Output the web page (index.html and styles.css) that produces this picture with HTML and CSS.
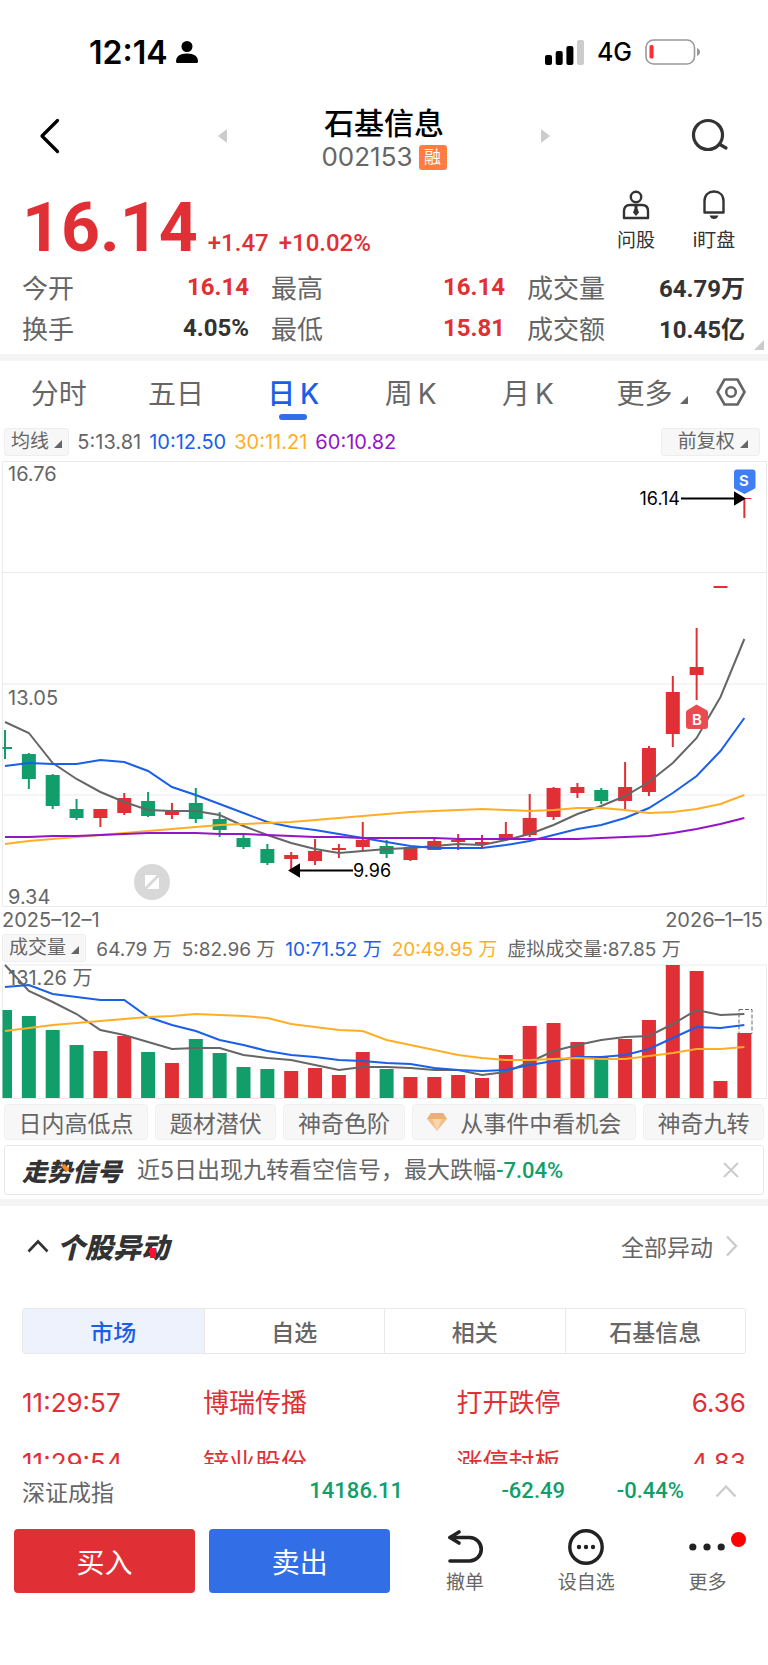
FILE: index.html
```html
<!DOCTYPE html>
<html lang="zh-CN">
  <head>
    <meta charset="UTF-8" />
    <meta name="viewport" content="width=device-width, initial-scale=1.0" />
    <title>石基信息 002153</title>
    <link rel="stylesheet" href="styles.css">
  </head>
  <body>
    <div class="status-bar">
      <div class="status-left">
        <span class="clock">12:14</span>
        <svg width="22" height="22" viewBox="0 0 22 22"><circle cx="11" cy="5.500" r="5.500" /><path d="M0 20.500C0 15.500 4 12.600 11 12.600s11 2.900 11 7.900c0 .9-.6 1.500-1.500 1.500h-19C.6 22 0 21.400 0 20.500z" /></svg>
      </div>
      <div class="status-right">
        <svg width="39" height="25" viewBox="0 0 39 25">
          <rect x="0" y="15" width="7" height="10" rx="2" />
          <rect x="10.700" y="11" width="7" height="14" rx="2" />
          <rect x="21.400" y="6" width="7" height="19" rx="2" />
          <rect x="32" y="0" width="7" height="25" rx="2" fill="#ccc" />
        </svg>
        <span class="network">4G</span>
        <svg width="56" height="26" viewBox="0 0 56 26">
          <rect x="1" y="1" width="48.500" height="24" rx="7.500" fill="none" stroke="#999" stroke-width="1.600" />
          <rect x="4.500" y="6" width="4" height="13.500" rx="1.500" fill="#ff2d34" />
          <path d="M52 9c4 1.500 4 6.500 0 8z" fill="#999" />
        </svg>
      </div>
    </div>

    <header class="header">
      <button class="icon-btn" type="button" aria-label="返回">
        <svg width="22" height="38" viewBox="0 0 22 38"><path d="M18.500 3.500L3 19l15.500 15.500" fill="none" stroke="#000" stroke-width="3.200" stroke-linecap="round" stroke-linejoin="round" /></svg>
      </button>
      <button class="icon-btn prev" type="button" aria-label="上一只">
        <svg width="9" height="14" viewBox="0 0 9 14"><path d="M9 0v14L0 7z" fill="#ccc" /></svg>
      </button>
      <div class="stock">
        <h1>石基信息</h1>
        <p>002153 <span class="tag">融</span></p>
      </div>
      <button class="icon-btn next" type="button" aria-label="下一只">
        <svg width="9" height="14" viewBox="0 0 9 14"><path d="M0 0v14l9-7z" fill="#ccc" /></svg>
      </button>
      <button class="icon-btn search" type="button" aria-label="搜索">
        <svg width="38" height="36" viewBox="0 0 38 36" fill="none" stroke="#333" stroke-width="3.200" stroke-linecap="round"><circle cx="17" cy="17" r="14.500" /><path d="M29 26.500l6 3.500" /></svg>
      </button>
    </header>

    <section class="quote">
      <div class="price">
        <span class="price-now">16.14</span>
        <span class="price-change">+1.47</span>
        <span class="price-change">+10.02%</span>
      </div>
      <button class="quote-action" type="button">
        <svg width="28" height="30" viewBox="0 0 28 30" fill="none" stroke="#333" stroke-width="2.400"><circle cx="14" cy="7" r="5.200" /><path d="M2 28V21c0-4 2-6 6-6h12c4 0 6 2 6 6v7z" stroke-linejoin="round" /><path d="M12.500 15.500h3v3l1.500 4-3 3.500-3-3.500 1.500-4z" fill="#333" stroke="none" /></svg>
        问股
      </button>
      <button class="quote-action" type="button">
        <svg width="28" height="30" viewBox="0 0 28 30" fill="none" stroke="#333" stroke-width="2.400"><path d="M4.500 22.500V11c0-6 4-9.500 9.500-9.500s9.500 3.500 9.500 9.500v11.500z" stroke-linejoin="round" /><path d="M9.500 25.500h9c-1 2.500-2.500 3.500-4.500 3.500s-3.500-1-4.500-3.500z" fill="#333" stroke="none" /></svg>
        i盯盘
      </button>
    </section>

    <dl class="stats">
      <div><dt>今开</dt><dd class="up">16.14</dd></div>
      <div><dt>最高</dt><dd class="up">16.14</dd></div>
      <div><dt>成交量</dt><dd>64.79万</dd></div>
      <div><dt>换手</dt><dd>4.05%</dd></div>
      <div><dt>最低</dt><dd class="up">15.81</dd></div>
      <div><dt>成交额</dt><dd>10.45亿</dd></div>
    </dl>

    <nav class="tabs">
      <button type="button">分时</button>
      <button type="button">五日</button>
      <button type="button" class="active">日&thinsp;K</button>
      <button type="button">周&thinsp;K</button>
      <button type="button">月&thinsp;K</button>
      <button type="button" class="more">更多 <i class="corner"></i></button>
      <button type="button" class="settings" aria-label="设置">
        <svg width="30" height="30" viewBox="0 0 30 30" fill="none" stroke="#666" stroke-width="2.600" stroke-linejoin="round"><path d="M8.500 2.500h13L28.500 15l-7 12.500h-13L1.500 15z" /><circle cx="15" cy="15" r="4.800" /></svg>
      </button>
    </nav>

    <div class="indicator-row">
      <button class="pick" type="button">均线 <i class="corner"></i></button>
      <span>5:13.81</span>
      <span class="ma10">10:12.50</span>
      <span class="ma30">30:11.21</span>
      <span class="ma60">60:10.82</span>
      <button class="pick pick-right" type="button">前复权 <i class="corner"></i></button>
    </div>

    <svg class="chart" id="priceChart" viewBox="0 0 768 448">
      <g class="grid-lines">
        <path d="M2.500 1.500H766.500V446.500H2.500zM2.500 112.500H766.500M2.500 224H766.500M2.500 335H766.500" />
      </g>
      <g id="candles"></g>
      <g id="priceLines"></g>
      <g class="axis-text">
        <text x="8" y="21">16.76</text>
        <text x="8" y="245">13.05</text>
        <text x="8" y="444">9.34</text>
      </g>
      <g class="note">
        <path d="M681 38.500H737" />
        <path d="M735 33v11l9-5.500z" />
        <text x="680" y="45" text-anchor="end">16.14</text>
        <path d="M298 410.500H353" />
        <path d="M299 405v11l-9-5.500z" />
        <text x="353" y="417">9.96</text>
      </g>
      <path d="M737 9.500h15.500a3 3 0 0 1 3 3V27a2 2 0 0 1-1.500 2l-9.500 5-9.500-5a2 2 0 0 1-1-2V12.500a3 3 0 0 1 3-3z" fill="#3f7ff5" />
      <text class="mark" x="744" y="26">S</text>
      <path d="M696.500 244.500l10 5.500a3 3 0 0 1 1.500 2.500V266a3 3 0 0 1-3 3h-16a3 3 0 0 1-3-3v-13.500a3 3 0 0 1 1.500-2.500z" fill="#eb4b50" />
      <text class="mark" x="697" y="265">B</text>
      <circle cx="152" cy="422" r="18" fill="#d8d8d8" />
      <path d="M145 415h12l-12 12zM159 429h-12l12-12z" fill="#fff" />
    </svg>
    <div class="dates"><span>2025–12–1</span><span>2026–1–15</span></div>

    <div class="indicator-row volume-row">
      <button class="pick" type="button">成交量 <i class="corner"></i></button>
      <span>64.79 万</span>
      <span>5:82.96 万</span>
      <span class="ma10">10:71.52 万</span>
      <span class="ma30">20:49.95 万</span>
      <span>虚拟成交量:87.85 万</span>
    </div>

    <svg class="chart" id="volumeChart" viewBox="0 0 768 136">
      <g class="grid-lines"><path d="M2.500 1H766.500V134.500H2.500z" /></g>
      <g id="volumes"></g>
      <rect x="739" y="45.500" width="13" height="24" fill="none" stroke="#666" stroke-dasharray="4 2" />
      <g class="axis-text"><text x="8" y="21">131.26 万</text></g>
      <g id="volumeLines"></g>
    </svg>

    <div class="chips">
      <button type="button">日内高低点</button>
      <button type="button">题材潜伏</button>
      <button type="button">神奇色阶</button>
      <button type="button">
        <svg width="22" height="20" viewBox="0 0 22 20"><path d="M5 1h12l4 6-10 12L1 7z" fill="#f3c08d" /><path d="M5 1h12l4 6H1z" fill="#e9b07a" /><path d="M6.500 7h9L11 19z" fill="#f9d5ad" /></svg>
        从事件中看机会
      </button>
      <button type="button">神奇九转</button>
    </div>

    <div class="signal">
      <strong class="logo-text logo-signal">走势信号</strong>
      <p>近5日出现九转看空信号，最大跌幅<b>-7.04%</b></p>
      <button class="icon-btn" type="button" aria-label="关闭">
        <svg width="16" height="16" viewBox="0 0 16 16"><path d="M1 1l14 14M15 1L1 15" stroke="#ccc" stroke-width="2" /></svg>
      </button>
    </div>

    <section class="moves">
      <div class="moves-head">
        <svg width="22" height="14" viewBox="0 0 22 14"><path d="M1.500 12.500L11 2.500l9.500 10" fill="none" stroke="#333" stroke-width="2.600" /></svg>
        <h2 class="logo-text logo-moves">个股异动</h2>
        <a href="#all">全部异动
          <svg width="13" height="22" viewBox="0 0 13 22"><path d="M2 1.500l9 9.500-9 9.500" fill="none" stroke="#ccc" stroke-width="2.400" /></svg>
        </a>
      </div>
      <div class="segments">
        <button type="button" class="active">市场</button>
        <button type="button">自选</button>
        <button type="button">相关</button>
        <button type="button">石基信息</button>
      </div>
      <div class="moves-list">
        <table>
          <tr><td>11:29:57</td><td>博瑞传播</td><td>打开跌停</td><td>6.36</td></tr>
          <tr><td>11:29:54</td><td>锌业股份</td><td>涨停封板</td><td>4.83</td></tr>
        </table>
      </div>
    </section>

    <div class="index-bar">
      <span class="index-name">深证成指</span>
      <b>14186.11</b>
      <b>-62.49</b>
      <b>-0.44%</b>
      <svg width="22" height="14" viewBox="0 0 22 14"><path d="M1.500 12.500L11 2.500l9.500 10" fill="none" stroke="#ccc" stroke-width="2.400" /></svg>
    </div>

    <footer class="trade-bar">
      <button class="buy" type="button">买入</button>
      <button class="sell" type="button">卖出</button>
      <div class="tools">
        <button type="button">
          <svg width="36" height="36" viewBox="0 0 36 36" fill="none" stroke="#222" stroke-width="3.600" stroke-linecap="round" stroke-linejoin="round"><path d="M3 8.500h19.500a11.500 11.500 0 0 1 0 23.500H3" /><path d="M12 3L3 8.500l9 5.500" /></svg>
          撤单
        </button>
        <button type="button">
          <svg width="36" height="36" viewBox="0 0 36 36"><circle cx="18" cy="18" r="16.200" fill="none" stroke="#222" stroke-width="3.400" /><g fill="#222"><circle cx="11" cy="18" r="2.200" /><circle cx="18" cy="18" r="2.200" /><circle cx="25" cy="18" r="2.200" /></g></svg>
          设自选
        </button>
        <button type="button" class="dot">
          <svg width="36" height="36" viewBox="0 0 36 36" fill="#222"><circle cx="3.800" cy="18" r="3.600" /><circle cx="18" cy="18" r="3.600" /><circle cx="32.200" cy="18" r="3.600" /></svg>
          更多
        </button>
      </div>
    </footer>

    <script>
      const RED = "#e03035";
      const GREEN = "#129e6a";
      const STEP = 23.85;
      const BAR = 14;

      // one row per day: colour, high, body top, body bottom, low
      const candles = [
        ["g", 270, 287, 289, 299], ["g", 293, 294, 319, 329],
        ["g", 314, 315, 346, 349], ["g", 339, 349, 358, 360],
        ["r", 349, 349, 358, 367], ["r", 333, 338, 353, 355],
        ["g", 332, 341, 356, 357], ["r", 343, 351, 355, 359],
        ["g", 328, 343, 359, 363], ["g", 352, 359, 370, 377],
        ["g", 374, 378, 387, 389], ["g", 384, 389, 403, 405],
        ["r", 392, 395, 399, 411], ["r", 379, 391, 401, 405],
        ["r", 384, 388, 390, 398], ["r", 362, 380, 387, 391],
        ["g", 380, 386, 394, 398], ["r", 386, 387, 400, 401],
        ["r", 379, 381, 390, 390], ["r", 374, 380, 382, 390],
        ["r", 375, 382, 384, 387], ["r", 362, 374, 380, 381],
        ["r", 334, 358, 375, 377], ["r", 327, 328, 357, 360],
        ["r", 323, 327, 333, 338], ["g", 328, 330, 341, 344],
        ["r", 302, 327, 341, 349], ["r", 286, 288, 332, 336],
        ["r", 216, 232, 274, 287], ["r", 168, 207, 215, 240],
        ["r", 126, 126, 128, 128], ["r", 38, 38, 39, 58],
      ];
      const volumes = [
        46, 52, 66, 81, 87, 72, 88, 99, 75, 89, 103, 105, 107, 104, 111, 88,
        105, 113, 113, 111, 114, 91, 62, 59, 78, 92, 75, 56, 1, 7, 117, 69,
      ];
      const priceLines = {
        "#666": [262, 273, 303, 319, 332, 342, 350, 351, 351, 355, 366, 375, 383, 389, 393, 391, 389, 388, 386, 384, 385, 380, 374, 365, 354, 346, 336, 322, 303, 278, 237, 179],
        "#1a5fe8": [306, 303, 304, 304, 300, 302, 311, 327, 335, 344, 353, 362, 367, 370, 374, 378, 382, 386, 388, 388, 388, 385, 381, 375, 369, 365, 358, 348, 333, 316, 291, 258],
        "#ffae26": [384, 381, 379, 377, 375, 373, 371, 369, 367, 365, 364, 363, 362, 360, 358, 356, 354, 352, 351, 350, 349, 350, 351, 350, 348, 348, 350, 353, 352, 349, 344, 335],
        "#9414c9": [377, 377, 376, 376, 375, 374, 373, 373, 373, 374, 374, 375, 376, 377, 377, 378, 378, 378, 378, 379, 379, 379, 379, 379, 379, 378, 377, 376, 373, 369, 364, 358],
      };
      const volumeLines = {
        "#666": [1, 27, 38, 50, 66, 71, 78, 85, 84, 84, 91, 94, 96, 101, 106, 103, 103, 104, 106, 106, 111, 108, 98, 87, 81, 76, 73, 72, 60, 46, 51, 50],
        "#1a5fe8": [23, 21, 30, 33, 36, 36, 53, 61, 67, 76, 81, 87, 91, 93, 96, 97, 99, 100, 104, 106, 107, 106, 101, 97, 93, 93, 91, 85, 74, 63, 64, 61],
        "#ffae26": [67, 64, 61, 59, 57, 55, 53, 52, 50, 51, 52, 54, 60, 63, 66, 67, 76, 81, 86, 91, 94, 96, 96, 95, 94, 95, 95, 92, 89, 85, 85, 83],
      };

      function add(parent, name, attrs) {
        const el = document.createElementNS("http://www.w3.org/2000/svg", name);
        for (const key in attrs) el.setAttribute(key, attrs[key]);
        document.getElementById(parent).appendChild(el);
      }

      function dayX(i) {
        return 5 + i * STEP;
      }

      function drawLines(parent, lines) {
        for (const color in lines) {
          const points = lines[color].map((y, i) => `${dayX(i)},${y}`).join(" ");
          add(parent, "polyline", { points, stroke: color, class: "line" });
        }
      }

      candles.forEach(([c, high, top, bottom, low], i) => {
        const fill = c === "r" ? RED : GREEN;
        // the first bar is cut by the left edge of the frame
        const left = Math.max(dayX(i) - BAR / 2, 2.5);
        const width = dayX(i) + BAR / 2 - left;
        add("candles", "rect", { x: dayX(i) - 1, y: high, width: 2, height: low - high, fill });
        add("candles", "rect", { x: left, y: top, width, height: bottom - top, fill });
        add("volumes", "rect", { x: left, y: volumes[i], width, height: 134 - volumes[i], fill });
      });

      drawLines("priceLines", priceLines);
      drawLines("volumeLines", volumeLines);
    </script>
  </body>
</html>
```
FILE: styles.css
```css
* {
  margin: 0;
  padding: 0;
  box-sizing: border-box;
}

body {
  font-family: "Inter", "Noto Sans CJK SC", sans-serif;
  background: #fff;
  color: #666;
}

button {
  font: inherit;
  color: inherit;
  background: none;
  border: none;
  white-space: nowrap;
  cursor: pointer;
}

svg {
  display: block;
  flex: none;
}

a {
  color: inherit;
  text-decoration: none;
}

/* status bar */
.status-bar {
  display: flex;
  justify-content: space-between;
  align-items: center;
  padding: 32px 67px 0 89px;
  height: 72px;
  color: #000;
}

.status-left,
.status-right {
  display: flex;
  align-items: center;
  gap: 8px;
}

.status-right {
  gap: 13px;
}

.clock {
  font-size: 32px;
  font-weight: 600;
}

.network {
  font-size: 25px;
  font-weight: 500;
}

/* header */
.header {
  display: grid;
  grid-template-columns: 100px 1fr 314px 1fr 100px;
  align-items: center;
  justify-items: center;
  height: 110px;
  padding-top: 18px;
}

.icon-btn {
  display: flex;
}

.prev {
  justify-self: end;
}

.next {
  justify-self: start;
}

.search {
  padding-right: 16px;
}

.stock {
  padding-top: 6px;
  text-align: center;
}

.stock h1 {
  font-size: 30px;
  line-height: 36px;
  font-weight: 500;
  color: #000;
}

.stock p {
  display: flex;
  align-items: center;
  justify-content: center;
  gap: 6px;
  font-size: 26px;
  line-height: 32px;
}

.tag {
  width: 28px;
  height: 25px;
  border-radius: 3px;
  background: #ff7d41;
  color: #fff;
  font-size: 17px;
  line-height: 25px;
  text-align: center;
}

/* quote */
.quote {
  display: flex;
  align-items: flex-end;
  padding: 0 15px 0 22px;
  height: 81px;
}

.price {
  flex: 1;
  display: flex;
  align-items: baseline;
  gap: 10px;
  color: #e03035;
  font-family: Roboto, sans-serif;
}

.price-now {
  font-size: 68px;
  line-height: 70px;
  font-weight: bold;
}

.price-change {
  font-size: 24px;
  font-weight: 500;
}

.quote-action {
  display: flex;
  flex-direction: column;
  align-items: center;
  gap: 5px;
  width: 78px;
  padding-bottom: 6px;
  font-size: 19px;
  line-height: 32px;
  color: #333;
}

.stats {
  display: grid;
  grid-template-columns: 227fr 234fr 218fr;
  column-gap: 22px;
  padding: 3px 23px 6px 22px;
  border-bottom: 7px solid #f4f4f4;
  position: relative;
}

.stats::after {
  content: "";
  position: absolute;
  right: 4px;
  bottom: 4px;
  border-left: 10px solid transparent;
  border-bottom: 10px solid #ccc;
}

.stats div {
  display: flex;
  justify-content: space-between;
  align-items: center;
  height: 41px;
  font-size: 26px;
}

.stats dd {
  font-family: Roboto, "Noto Sans CJK SC", sans-serif;
  font-size: 24px;
  font-weight: bold;
  color: #333;
}

.stats .up {
  color: #e03035;
}

/* period tabs */
.tabs {
  display: grid;
  grid-template-columns: repeat(6, 1fr) 64px;
  height: 66px;
  font-size: 28px;
}

.tabs button {
  position: relative;
  padding-bottom: 4px;
}

.tabs .active {
  color: #1a5fe8;
  font-weight: 500;
}

.tabs .active::after {
  content: "";
  position: absolute;
  left: calc(50% - 14px);
  bottom: 7px;
  width: 28px;
  height: 6px;
  border-radius: 3px;
  background: #326fe6;
}

.tabs .more {
  padding-left: 14px;
}

.corner {
  display: inline-block;
  border-left: 8px solid transparent;
  border-bottom: 8px solid #666;
}

.settings {
  display: flex;
  align-items: center;
  padding-left: 12px;
}

/* indicator rows */
.indicator-row {
  display: flex;
  align-items: center;
  gap: 8px;
  height: 33px;
  padding: 0 8px 4px 4px;
  font-size: 20px;
  white-space: nowrap;
}

.pick {
  height: 28px;
  padding: 0 6px;
  border: 1px solid #eee;
  border-radius: 3px;
  background: #f7f7f7;
  font-size: 19px;
  line-height: 26px;
}

.pick-right {
  margin-left: auto;
  padding: 0 11px 0 16px;
}

.ma10 {
  color: #1a5fe8;
}

.ma30 {
  color: #ffae26;
}

.ma60 {
  color: #9414c9;
}

.volume-row {
  gap: 10px;
  height: 31px;
  padding: 0 8px 2px 2px;
  font-size: 19px;
}

.dates {
  display: flex;
  justify-content: space-between;
  padding: 0 5px 0 2px;
  font-size: 20px;
  line-height: 25px;
}

/* charts */
.chart {
  width: 100%;
  height: auto;
}

.grid-lines {
  fill: none;
  stroke: #ebebeb;
  stroke-width: 1;
}

.line {
  fill: none;
  stroke-width: 2;
}

.axis-text {
  fill: #666;
  font-size: 20px;
}

.note {
  fill: #000;
  font-size: 18px;
}

.note path {
  stroke: #000;
  stroke-width: 2;
}

.mark {
  fill: #fff;
  font-size: 15px;
  font-weight: 600;
  text-anchor: middle;
}

/* shortcuts */
.chips {
  display: flex;
  gap: 7px;
  padding: 4px 4px 5px;
  overflow: hidden;
}

.chips button {
  display: flex;
  align-items: center;
  justify-content: center;
  gap: 12px;
  flex: 1 0 auto;
  height: 36px;
  padding: 0 12px;
  border: 1px solid #f0f0f0;
  border-radius: 4px;
  background: #f7f7f7;
  font-size: 23px;
}

.signal {
  display: flex;
  align-items: center;
  height: 50px;
  margin: 0 4px 4px;
  padding: 0 24px 0 17px;
  border: 1px solid #e8e8e8;
  border-radius: 3px;
}

.signal p {
  flex: 1;
  margin-left: 15px;
  font-size: 23px;
  line-height: 32px;
  white-space: nowrap;
}

.signal b,
.index-bar b {
  font-family: Roboto, sans-serif;
  font-size: 22px;
  font-weight: 500;
  color: #129e6a;
}

.logo-text {
  position: relative;
  color: #333;
  font-style: italic;
  font-weight: 900;
  white-space: nowrap;
}

/* coloured strokes of the two section logos */
.logo-text::after {
  content: "";
  position: absolute;
}

.logo-signal {
  font-size: 25px;
}

.logo-signal::after {
  left: 40px;
  top: 14px;
  width: 7px;
  height: 4px;
  background: #f58a1f;
  transform: rotate(45deg);
}

.logo-moves {
  font-size: 28px;
}

.logo-moves::after {
  left: 93px;
  bottom: 8px;
  width: 6px;
  height: 10px;
  background: #ff1030;
}

/* moves */
.moves {
  border-top: 7px solid #f4f4f4;
  padding: 0 22px;
}

.moves-head {
  display: flex;
  align-items: center;
  height: 102px;
  padding: 0 8px 22px 5px;
}

.moves-head h2 {
  margin: 0 auto 0 8px;
}

.moves-head a {
  display: flex;
  align-items: center;
  gap: 12px;
  font-size: 23px;
}

.segments {
  display: grid;
  grid-template-columns: repeat(4, 1fr);
  height: 46px;
  border: 1px solid #e8e8e8;
  border-radius: 3px;
  font-size: 23px;
  font-weight: 500;
}

.segments button + button {
  border-left: 1px solid #e8e8e8;
}

.segments .active {
  background: #edf2fd;
  color: #1a5fe8;
}

.moves-list {
  height: 91px;
  margin-top: 19px;
  overflow: hidden;
}

.moves-list table {
  width: 100%;
  border-collapse: collapse;
  table-layout: fixed;
  color: #e03035;
  font-size: 26px;
  line-height: 36px;
}

.moves-list td {
  height: 60px;
}

.moves-list td:nth-child(1) {
  width: 25%;
}

.moves-list td:nth-child(2) {
  width: 35%;
}

.moves-list td:last-child {
  text-align: right;
}

/* bottom bars */
.index-bar {
  display: grid;
  grid-template-columns: 1fr 100px 162px 119px 53px;
  align-items: center;
  justify-items: end;
  height: 53px;
  padding: 0 31px 0 22px;
  background: #fff;
}

.index-name {
  justify-self: start;
  font-size: 23px;
}

.trade-bar {
  display: grid;
  grid-template-columns: 181fr 181fr 363fr;
  gap: 14px;
  padding: 12px 0 72px 14px;
}

.buy,
.sell {
  height: 64px;
  border-radius: 4px;
  color: #fff;
  font-size: 28px;
}

.buy {
  background: #e03035;
}

.sell {
  background: #326fe6;
}

.tools {
  display: grid;
  grid-template-columns: repeat(3, 1fr);
}

.tools button {
  position: relative;
  display: flex;
  flex-direction: column;
  align-items: center;
  gap: 4px;
  font-size: 19px;
  line-height: 28px;
}

.dot::after {
  content: "";
  position: absolute;
  top: 3px;
  left: calc(50% + 24px);
  width: 15px;
  height: 15px;
  border-radius: 50%;
  background: #f00;
}
```
